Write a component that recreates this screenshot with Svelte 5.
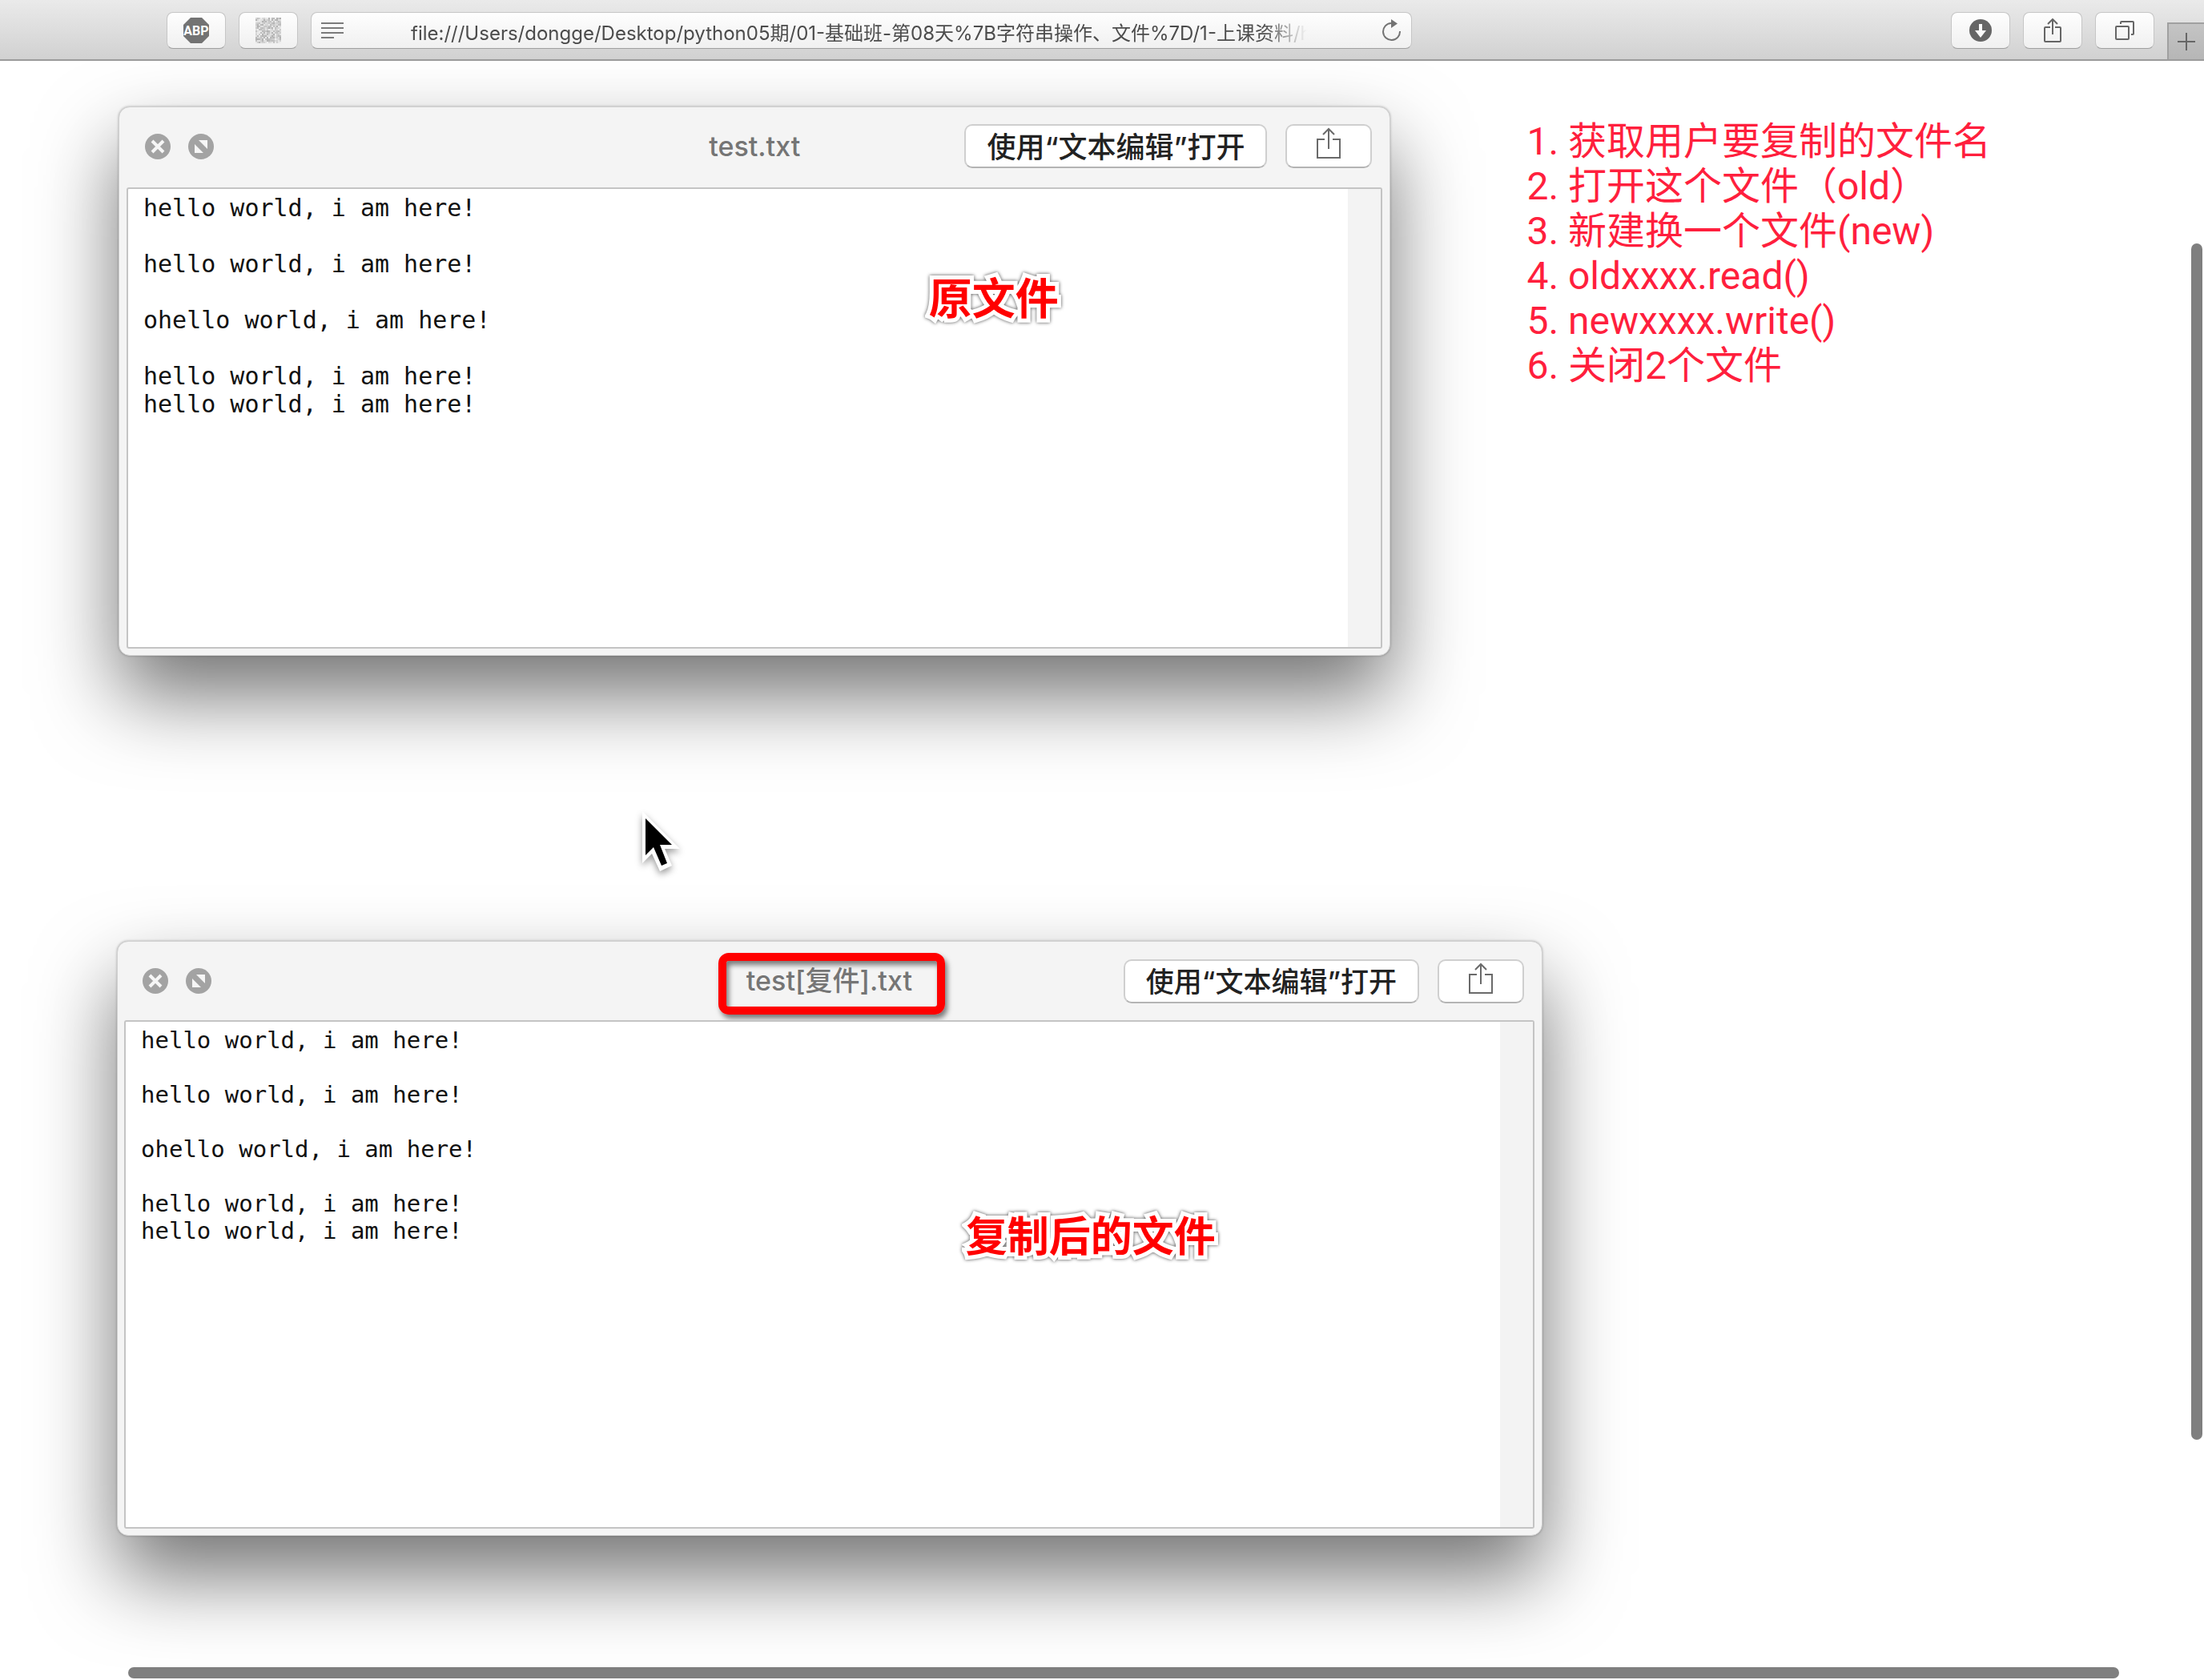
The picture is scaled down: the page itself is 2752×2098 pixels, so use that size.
<script>
  const address = 'file:///Users/dongge/Desktop/python05期/01-基础班-第08天%7B字符串操作、文件%7D/1-上课资料/html';

  const fileText = [
    'hello world, i am here!',
    '',
    'hello world, i am here!',
    '',
    'ohello world, i am here!',
    '',
    'hello world, i am here!',
    'hello world, i am here!'
  ].join('\n');

  const steps = [
    '获取用户要复制的文件名',
    '打开这个文件（old）',
    '新建换一个文件(new)',
    'oldxxxx.read()',
    'newxxxx.write()',
    '关闭2个文件'
  ];

  const cells = [];
  let seed = 7;
  for (let y = 0; y < 16; y++) {
    for (let x = 0; x < 16; x++) {
      seed = (seed * 1103515245 + 12345) % 2147483648;
      const shade = 176 + Math.floor((seed / 2147483648) * 64);
      cells.push({ x: x * 2, y: y * 2, fill: `rgb(${shade},${shade},${shade})` });
    }
  }
</script>

{#snippet shareIcon()}
  <svg class="share-icon" viewBox="0 0 32 40" aria-hidden="true">
    <path d="M11 15H2V38H30V15H21" />
    <path d="M16 27V2M9 9L16 2L23 9" />
  </svg>
{/snippet}

{#snippet preview(kind, title, label)}
  <section class="window {kind}" aria-label={title}>
    <header class="titlebar">
      <div class="controls">
        <button class="dot" aria-label="关闭">
          <svg viewBox="0 0 32 32" aria-hidden="true">
            <circle cx="16" cy="16" r="16" fill="#a3a3a3" />
            <path d="M9 9L23 23M23 9L9 23" stroke="#f6f6f6" stroke-width="4" fill="none" />
          </svg>
        </button>
        <button class="dot" aria-label="全屏">
          <svg viewBox="0 0 32 32" aria-hidden="true">
            <circle cx="16" cy="16" r="16" fill="#a3a3a3" />
            <path d="M13 8H24V19ZM8 13V24H19Z" fill="#f6f6f6" />
          </svg>
        </button>
      </div>
      <h2 class="title">{title}</h2>
      <div class="actions">
        <button class="open">使用“文本编辑”打开</button>
        <button class="share" aria-label="共享">{@render shareIcon()}</button>
      </div>
    </header>
    <div class="pane">
      <pre>{fileText}</pre>
      <div class="track"></div>
      <span class="label">{label}</span>
    </div>
  </section>
{/snippet}

<div class="browser">
  <nav class="toolbar">
    <button class="tool" aria-label="Adblock Plus">
      <svg width="32" height="32" viewBox="0 0 32 32" aria-hidden="true">
        <path d="M9 0H23L32 9V23L23 32H9L0 23V9Z" fill="#737373" />
        <text x="16" y="22" text-anchor="middle" class="abp">ABP</text>
      </svg>
    </button>
    <button class="tool" aria-label="二维码">
      <svg width="32" height="32" viewBox="0 0 32 32" aria-hidden="true">
        {#each cells as c}
          <rect x={c.x} y={c.y} width="2" height="2" fill={c.fill} />
        {/each}
      </svg>
    </button>
    <div class="address">
      <button class="plain" aria-label="阅读器">
        <svg width="28" height="20" viewBox="0 0 28 20" aria-hidden="true">
          <path d="M0 1H28M0 7H28M0 13H28M0 19H16" stroke="#7b7b7b" stroke-width="2" />
        </svg>
      </button>
      <input class="url" type="text" aria-label="地址" value={address} />
      <button class="plain" aria-label="重新载入">
        <svg width="24" height="28" viewBox="0 0 24 28" aria-hidden="true">
          <path d="M11 5A10.500 10.500 0 1 0 22 15" fill="none" stroke="#737373" stroke-width="2" />
          <path d="M11 0L19 5.500L11 11Z" fill="#737373" />
        </svg>
      </button>
    </div>
    <div class="right-tools">
      <button class="tool" aria-label="下载">
        <svg width="28" height="28" viewBox="0 0 28 28" aria-hidden="true">
          <circle cx="14" cy="14" r="14" fill="#666" />
          <path d="M12 6H16V14H21L14 23L7 14H12Z" fill="#fbfbfb" />
        </svg>
      </button>
      <button class="tool" aria-label="共享">
        <svg width="22" height="30" viewBox="0 0 22 30" fill="none" stroke="#666" stroke-width="2" aria-hidden="true">
          <path d="M8 11H2Q1 11 1 12V28Q1 29 2 29H20Q21 29 21 28V12Q21 11 20 11H14" />
          <path d="M11 20V1M5 7L11 1L17 7" />
        </svg>
      </button>
      <button class="tool" aria-label="标签页概览">
        <svg width="24" height="24" viewBox="0 0 24 24" fill="none" stroke="#666" stroke-width="2" aria-hidden="true">
          <rect x="1" y="7" width="16" height="16" rx="1" />
          <path d="M7 4V2Q7 1 8 1H22Q23 1 23 2V16Q23 17 22 17H20" />
        </svg>
      </button>
    </div>
    <button class="new-tab" aria-label="新建标签页">
      <svg width="22" height="22" viewBox="0 0 22 22" aria-hidden="true">
        <path d="M11 0V22M0 11H22" stroke="#666" stroke-width="2" />
      </svg>
    </button>
  </nav>

  <main>
    <div class="top-row">
      {@render preview('original', 'test.txt', '原文件')}
      <ol class="steps">
        {#each steps as step, i}
          <li>{i + 1}. {step}</li>
        {/each}
      </ol>
    </div>
    {@render preview('copy', 'test[复件].txt', '复制后的文件')}
    <div class="scroll-x"></div>
    <div class="scroll-y"></div>
    <svg class="cursor" width="60" height="88" viewBox="0 0 60 88" aria-hidden="true">
      <path d="M2 1V66L14 54L24 76L39 69L30 48H49Z" fill="#fff" />
      <path d="M6 10V56L16 46L26 69L33 66L24 43H39Z" fill="#000" />
    </svg>
  </main>
</div>

<style>
  :global(body) {
    background: #fff;
  }

  .browser {
    display: flex;
    flex-direction: column;
    min-height: 100vh;
    overflow: hidden;
    font-family: Inter, 'Noto Sans CJK SC', sans-serif;
  }

  button {
    display: flex;
    align-items: center;
    justify-content: center;
    padding: 0;
    border: 0;
    background: none;
    font-family: inherit;
  }

  .toolbar {
    position: relative;
    z-index: 1;
    display: flex;
    gap: 16px;
    box-sizing: border-box;
    height: 76px;
    padding: 15px 0 0 208px;
    border-bottom: 2px solid #9b9b9b;
    background: linear-gradient(#eaeaea, #d1d1d1);
  }

  .tool,
  .address {
    box-sizing: border-box;
    height: 46px;
    border: 1px solid #c6c6c6;
    border-bottom-color: #a0a0a0;
    border-radius: 8px;
    background: linear-gradient(#fefefe, #f0f0f0);
  }

  .tool {
    flex: none;
    width: 74px;
  }

  .abp {
    fill: #fff;
    font: bold 16px 'Liberation Sans Narrow', Roboto, sans-serif;
  }

  .address {
    display: flex;
    align-items: center;
    flex: 0 1 1375px;
    padding: 0 12px;
  }

  .url {
    flex: 1;
    min-width: 0;
    height: 42px;
    margin: 0 88px 0 84px;
    padding: 2px 0 0;
    border: 0;
    outline: 0;
    background: none;
    color: #4c4c4c;
    font: 24px/40px Inter, 'Noto Sans CJK SC', sans-serif;
    mask-image: linear-gradient(to right, #000 calc(100% - 60px), transparent calc(100% - 6px));
  }

  .right-tools {
    display: flex;
    gap: 16px;
    margin-left: auto;
  }

  .new-tab {
    align-self: flex-end;
    box-sizing: border-box;
    width: 46px;
    height: 46px;
    border: solid #a0a0a0;
    border-width: 2px 0 0 2px;
    background: linear-gradient(#c4c4c4, #b6b6b6);
  }

  main {
    position: relative;
    flex: 1;
    padding: 57px 0 160px 146px;
  }

  .top-row {
    display: grid;
    grid-template-columns: 61fr 39fr;
    margin-bottom: 356px;
    padding-left: 2px;
  }

  .window {
    position: relative;
    box-sizing: border-box;
    padding: 0 9px 8px;
    border: 1px solid #d0d0d0;
    border-radius: 14px;
    background: #f4f4f4;
    box-shadow: 0 50px 100px rgba(0, 0, 0, 0.55), 0 0 3px rgba(0, 0, 0, 0.3);
  }

  .copy {
    width: 68.3%;
    padding-left: 8px;
  }

  .titlebar {
    display: grid;
    grid-template-columns: 1fr auto 1fr;
    align-items: center;
    box-sizing: border-box;
    height: 100px;
    padding: 0 13px 3px;
  }

  .copy .titlebar {
    height: 98px;
    padding-bottom: 0;
  }

  .controls {
    display: flex;
    gap: 22px;
    padding-left: 10px;
  }

  .dot,
  .dot svg {
    width: 32px;
    height: 32px;
  }

  .title {
    margin: 0;
    color: #757575;
    font-size: 34px;
    font-weight: 500;
    line-height: 56px;
  }

  .copy .title {
    position: relative;
  }

  .copy .title::after {
    content: '';
    position: absolute;
    inset: -7px -41px -14px -35px;
    border: 10px solid #f00;
    border-radius: 13px;
    box-shadow: 3px 5px 6px rgba(0, 0, 0, 0.5), inset 3px 5px 6px rgba(0, 0, 0, 0.5);
  }

  .actions {
    display: flex;
    justify-content: flex-end;
    gap: 23px;
  }

  .open,
  .share {
    box-sizing: border-box;
    height: 55px;
    border: 2px solid #cfcfcf;
    border-bottom-color: #b4b4b4;
    border-radius: 10px;
    background: #fff;
    color: #222;
  }

  .open {
    padding: 0 26px 3px;
    font-size: 36px;
    font-weight: 500;
  }

  .copy .open {
    font-size: 35px;
  }

  .share {
    width: 108px;
    padding-bottom: 7px;
  }

  .share-icon {
    width: 32px;
    height: 40px;
    fill: none;
    stroke: #6a6a6a;
    stroke-width: 2;
  }

  .pane {
    position: relative;
    display: flex;
    justify-content: space-between;
    box-sizing: border-box;
    min-height: 576px;
    border: 2px solid #c4c4c4;
    border-radius: 3px;
    background: #fff;
  }

  .copy .pane {
    min-height: 635px;
  }

  pre {
    margin: 0;
    padding: 6px 0 0 19px;
    color: #111;
    font: 30px/35px 'DejaVu Sans Mono', monospace;
  }

  .copy pre {
    font-size: 29px;
    line-height: 34px;
  }

  .track {
    width: 41px;
    background: #f3f3f3;
  }

  .label {
    position: absolute;
    top: 96px;
    left: 63.9%;
    color: #f00;
    font: bold 54px/76px 'Noto Sans CJK SC', sans-serif;
    -webkit-text-stroke: 10px #fff;
    paint-order: stroke fill;
    filter: drop-shadow(0 0 2px rgba(0, 0, 0, 0.7));
  }

  .copy .label {
    top: 227px;
    left: 59.7%;
    font-size: 52px;
  }

  .steps {
    margin: 0;
    padding: 16px 0 0 170px;
    color: #ff1f3d;
    font-family: Roboto, 'Noto Sans CJK SC', sans-serif;
    font-size: 48px;
    line-height: 56px;
    list-style: none;
    white-space: nowrap;
  }

  .scroll-x,
  .scroll-y {
    position: absolute;
    border-radius: 7px;
    background: #7f7f7f;
  }

  .scroll-x {
    right: 106px;
    bottom: 2px;
    left: 160px;
    height: 14px;
  }

  .scroll-y {
    top: 228px;
    right: 2px;
    bottom: 300px;
    width: 14px;
  }

  .cursor {
    position: absolute;
    top: 936px;
    left: 800px;
    filter: drop-shadow(0 4px 4px rgba(0, 0, 0, 0.4));
  }
</style>
